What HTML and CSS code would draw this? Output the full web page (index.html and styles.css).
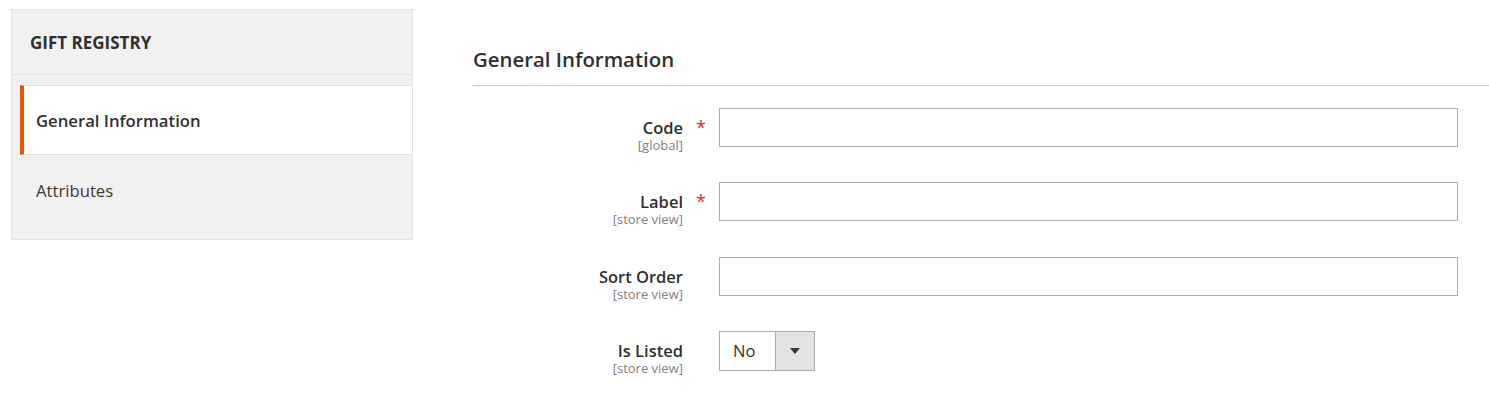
FILE: index.html
```html
<!DOCTYPE html>
<html>
<head>
<meta charset="utf-8">
<link rel="stylesheet" href="styles.css">
</head>
<body>
<div class="page">
  <aside class="nav">
    <div class="nav-title">GIFT REGISTRY</div>
    <ul class="nav-items">
      <li class="nav-item active">General Information</li>
      <li class="nav-item">Attributes</li>
    </ul>
  </aside>
  <main class="main">
    <h2 class="section-title">General Information</h2>
    <div class="form">
      <div class="row">
        <div class="label"><span class="label-text">Code</span><span class="scope">[global]</span></div>
        <div class="req">*</div>
        <div class="control"><input class="input" type="text"></div>
      </div>
      <div class="row">
        <div class="label"><span class="label-text">Label</span><span class="scope">[store view]</span></div>
        <div class="req">*</div>
        <div class="control"><input class="input" type="text"></div>
      </div>
      <div class="row">
        <div class="label"><span class="label-text">Sort Order</span><span class="scope">[store view]</span></div>
        <div class="req"></div>
        <div class="control"><input class="input" type="text"></div>
      </div>
      <div class="row">
        <div class="label"><span class="label-text">Is Listed</span><span class="scope">[store view]</span></div>
        <div class="req"></div>
        <div class="control">
          <div class="select"><span class="select-value">No</span><span class="select-arrow"><span class="tri"></span></span></div>
        </div>
      </div>
    </div>
  </main>
</div>
</body>
</html>
```

FILE: styles.css
```css
* { box-sizing: border-box; }
html, body { margin: 0; padding: 0; background: #fff; }
body { font-family: "Open Sans", "Liberation Sans", sans-serif; color: #303030; }
.page { display: flex; align-items: flex-start; padding: 9px 0 20px 11px; }
.nav { width: 402px; flex: none; background: #f1f1f1; border: 1px solid #e3e3e3; padding-bottom: 14px; }
.nav-title { height: 65px; border-bottom: 1px solid #e3e3e3; padding-left: 18px; display: flex; align-items: center; font-size: 17px; font-weight: 700; color: #303030; }
.nav-items { list-style: none; margin: 0; padding: 10px 0 0 8px; }
.nav-item { height: 70px; display: flex; align-items: center; padding-left: 12px; font-size: 16.7px; color: #41362f; border-left: 4px solid transparent; }
.nav-item.active { background: #fff; border-left-color: #eb5202; font-weight: 600; color: #303030; border-top: 1px solid #e3e3e3; border-bottom: 1px solid #e3e3e3; }
.main { flex: 1; margin-left: 60px; }
.section-title { margin: 0; font-size: 20.4px; font-weight: 600; color: #303030; height: 77px; padding-top: 37px; line-height: 27px; border-bottom: 1px solid #cccccc; }
.form { padding-top: 22px; display: flex; flex-direction: column; gap: 29.3px; }
.row { display: grid; grid-template-columns: 210px 36px 739px; align-items: start; }
.label { display: flex; flex-direction: column; align-items: flex-end; padding-top: 10px; }
.label-text { font-size: 16.5px; font-weight: 600; line-height: 19px; color: #303030; }
.scope { font-size: 13px; line-height: 16px; color: #808080; }
.req { color: #e02b27; font-size: 18px; text-align: center; padding-top: 9px; line-height: 20px; }
.input { display: block; width: 739px; height: 39px; border: 1px solid #adadad; margin: 0; padding: 0 10px; background: #fff; font: inherit; }
.select { display: flex; width: 96px; height: 40px; border: 1px solid #adadad; background: #fff; }
.select-value { flex: 1; display: flex; align-items: center; padding-left: 13px; font-size: 16.5px; color: #303030; }
.select-arrow { width: 39px; background: #e3e3e3; border-left: 1px solid #adadad; display: flex; align-items: center; justify-content: center; }
.tri { width: 0; height: 0; border-left: 5px solid transparent; border-right: 5px solid transparent; border-top: 6px solid #41362f; }
```
